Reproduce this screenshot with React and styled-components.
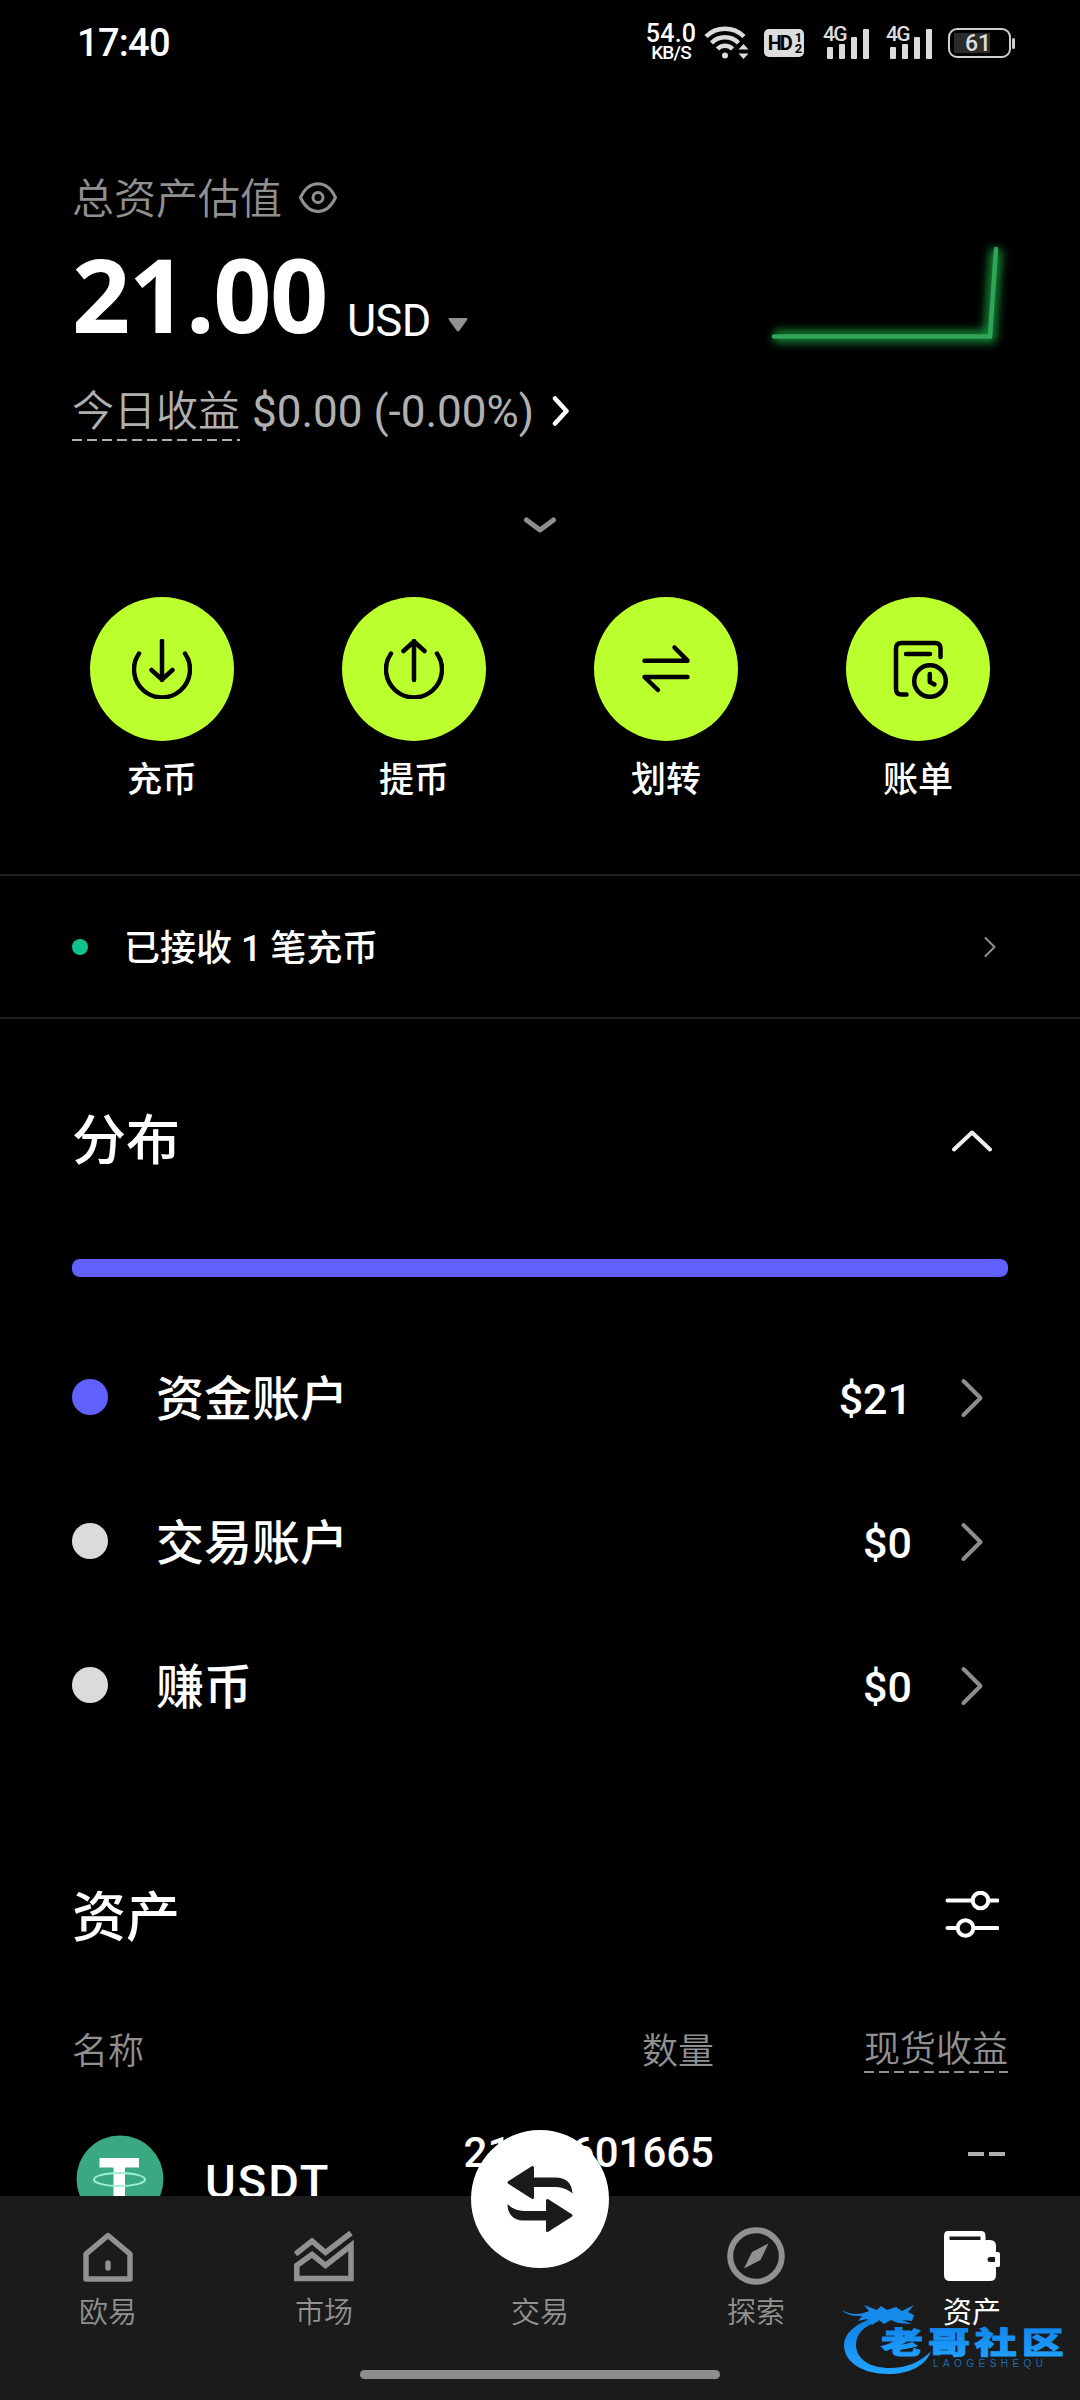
import React from 'react';
import styled, { createGlobalStyle } from 'styled-components';

const GlobalStyle = createGlobalStyle`
	* {
		box-sizing: border-box;
	}

	body {
		margin: 0;
		background: #000;
		color: #fff;
		font-family: Roboto, 'Noto Sans CJK SC', sans-serif;
	}

	svg {
		display: block;
		flex: none;
	}
`;

const Page = styled.div`
	position: relative;
	width: 1080px;
	height: 2400px;
	overflow: hidden;
	background: #000;
`;

const StatusBar = styled.header`
	display: flex;
	align-items: center;
	height: 86px;
	padding: 0 65px 0 77px;
`;

const Clock = styled.span`
	flex: 1;
	font-size: 38px;
	font-weight: 500;
	line-height: 44px;
	letter-spacing: -0.7px;
`;

const Speed = styled.div`
	display: flex;
	flex-direction: column;
	align-items: center;
	width: 54px;
	margin-right: 6px;
	font-weight: 500;
`;

const SpeedValue = styled.span`
	font-size: 25px;
	line-height: 20px;
	letter-spacing: 0.2px;
`;

const SpeedUnit = styled.span`
	font-size: 19px;
	line-height: 18px;
	letter-spacing: -0.8px;
`;

const StatusIcons = styled.div`
	display: flex;
	align-items: center;
	color: #dcdcdc;
`;

const HdBadge = styled.div`
	display: flex;
	align-items: center;
	justify-content: center;
	gap: 4px;
	width: 40px;
	height: 28px;
	margin: 0 19px 0 14px;
	border-radius: 5px;
	background: #dcdcdc;
	color: #000;
	font: 700 20px/28px Roboto, sans-serif;
	letter-spacing: -2px;
`;

const HdLines = styled.span`
	display: flex;
	flex-direction: column;
	font-size: 13px;
	line-height: 11px;
`;

const SignalBox = styled.div`
	position: relative;
	width: 47px;
	height: 34px;
	margin-right: 16px;
`;

const SignalLabel = styled.span`
	position: absolute;
	left: 0;
	top: -2px;
	font: 500 21px/21px Roboto, sans-serif;
	letter-spacing: -1.6px;
`;

const Battery = styled.div`
	position: relative;
	width: 63px;
	height: 30px;
	margin-left: -1px;
	border: 2px solid #cfcfcf;
	border-radius: 9px;
	background: linear-gradient(90deg, #2b2b2b 36px, #000 36px) 4px 3px / 50px 20px no-repeat;
	font: 500 23px/27px Roboto, sans-serif;
	text-align: center;
	padding-right: 3px;
	margin-right: 4px;

	&::after {
		content: '';
		position: absolute;
		right: -6px;
		top: 8px;
		width: 3px;
		height: 11px;
		border-radius: 2px;
		background: #cfcfcf;
	}
`;

const Summary = styled.section`
	padding: 84px 72px 0;
`;

const SummaryLabel = styled.div`
	display: flex;
	align-items: center;
	height: 60px;
	gap: 17px;
	color: #909090;
	font-size: 42px;
	font-weight: 350;
	line-height: 60px;

	svg {
		margin-bottom: 5px;
	}
`;

const BalanceRow = styled.div`
	display: flex;
	justify-content: space-between;
	height: 120px;
`;

const Balance = styled.div`
	display: flex;
	align-items: baseline;
	height: 120px;
`;

const Amount = styled.span`
	font-family: 'Open Sans', sans-serif;
	font-size: 102px;
	font-weight: 700;
	line-height: 127px;
	letter-spacing: -1.5px;
`;

const Currency = styled.span`
	margin: 0 17px 0 20px;
	font-size: 45px;
	font-weight: 400;
	letter-spacing: -0.5px;
	position: relative;
	top: 3px;
`;

const Caret = styled.svg`
	margin-bottom: 5px;
`;

const Profit = styled.div`
	display: flex;
	align-items: center;
	height: 60px;
	margin-top: 31px;
	color: #b0b0b0;
	font-size: 42px;
	line-height: 60px;
	white-space: pre;
`;

const dashes = (color) => `
	background: repeating-linear-gradient(90deg, ${color} 0 10px, transparent 10px 15px)
		left bottom / 100% 2px no-repeat;
`;

const ProfitLabel = styled.span`
	height: 60px;
	margin-right: 12px;
	padding-top: 1px;
	font-weight: 350;
	${dashes('#b0b0b0')}
`;

const ProfitValue = styled.span`
	margin-right: 18px;
	padding-top: 1px;
	font-size: 44px;
`;

const Expand = styled.div`
	display: flex;
	justify-content: center;
	padding-top: 75px;
`;

const Actions = styled.nav`
	display: flex;
	gap: 108px;
	padding: 63px 90px 0;
`;

const Action = styled.div`
	display: flex;
	flex-direction: column;
	align-items: center;
	width: 144px;
	font-size: 35px;
	font-weight: 500;
	line-height: 50px;
`;

const ActionButton = styled.div`
	display: grid;
	place-items: center;
	width: 144px;
	height: 144px;
	margin-bottom: 15px;
	border-radius: 50%;
	background: #bcff2f;
	color: #000;
`;

const Notice = styled.div`
	display: flex;
	align-items: center;
	height: 145px;
	margin-top: 68px;
	padding: 0 84px 0 72px;
	border-top: 2px solid #202020;
	border-bottom: 2px solid #202020;
	font-size: 36px;
	font-weight: 500;
	line-height: 50px;
`;

const NoticeText = styled.span`
	flex: 1;
	margin-left: 36px;
	padding-top: 5px;
`;

const Dot = styled.span`
	width: ${(props) => props.$size}px;
	height: ${(props) => props.$size}px;
	border-radius: 50%;
	background: ${(props) => props.$color};
`;

const Section = styled.section`
	padding: ${(props) => props.$top}px 72px 0;
`;

const SectionHead = styled.div`
	display: flex;
	align-items: center;
	justify-content: space-between;
	height: 60px;
	padding-right: ${(props) => props.$inset}px;
`;

const Title = styled.h2`
	margin: 0;
	padding-top: 6px;
	font-size: 54px;
	font-weight: 500;
	line-height: 60px;
`;

const Share = styled.div`
	height: 18px;
	margin: 90px 0 48px;
	border-radius: 8px;
	background: #6161ff;
`;

const Account = styled.div`
	display: flex;
	align-items: center;
	height: 144px;
	padding-right: 24px;
	font-size: 48px;
	font-weight: 500;
	line-height: 60px;

	svg {
		margin-top: 2px;
	}
`;

const AccountName = styled.span`
	flex: 1;
	margin-left: 48px;
	padding-top: 6px;
`;

const AccountValue = styled.span`
	margin-right: 48px;
	padding-top: 3px;
	font-size: 43px;
`;

const Columns = styled.div`
	display: grid;
	grid-template-columns: 1fr 300px 294px;
	margin-top: 74px;
	color: #909090;
	font-size: 36px;
	font-weight: 350;
	line-height: 53px;
`;

const ColumnName = styled.span`
	justify-self: ${(props) => props.$side || 'end'};
	height: 53px;
	padding-top: ${(props) => (props.$dashed ? 4 : 6)}px;
	${(props) => props.$dashed && dashes('#909090')}
`;

const Asset = styled.div`
	display: grid;
	grid-template-columns: 1fr 300px 294px;
	margin-top: 62px;
`;

const Coin = styled.div`
	display: flex;
	gap: 41px;
	padding-left: 4px;
`;

const CoinName = styled.span`
	margin-top: 24px;
	font-size: 47px;
	font-weight: 500;
	line-height: 46px;
	letter-spacing: 2px;
`;

const Quantity = styled.span`
	justify-self: end;
	margin-top: -11px;
	font-size: 42px;
	font-weight: 500;
	line-height: 57px;
`;

const Empty = styled.span`
	display: flex;
	justify-self: end;
	gap: 5px;
	padding: 17px 3px 0 0;

	&::before,
	&::after {
		content: '';
		width: 16px;
		height: 4px;
		background: #b0b0b0;
	}
`;

const TabBar = styled.nav`
	position: absolute;
	left: 0;
	right: 0;
	bottom: 0;
	display: flex;
	height: 204px;
	background: #1b1b1b;
`;

const Tab = styled.div`
	display: flex;
	flex-direction: column;
	align-items: center;
	width: 216px;
	padding-top: 30px;
	color: ${(props) => (props.$active ? '#fff' : '#919191')};
	font-size: 29px;
	font-weight: ${(props) => (props.$active ? 400 : 350)};
	line-height: 50px;

	& > svg {
		margin-bottom: 2px;
	}
`;

const TradeButton = styled.div`
	display: grid;
	place-items: center;
	width: 138px;
	height: 138px;
	margin: -96px 0 20px;
	border-radius: 50%;
	background: #fff;
`;

const HomeIndicator = styled.div`
	position: absolute;
	left: 360px;
	bottom: 21px;
	width: 360px;
	height: 9px;
	border-radius: 5px;
	background: #8e8e8e;
`;

const Watermark = styled.svg`
	position: absolute;
	right: 8px;
	bottom: 20px;
`;

const Stroke = ({ w, h, d, width = 4.5, color = 'currentColor', children }) => (
	<svg
		width={w}
		height={h}
		viewBox={`0 0 ${w} ${h}`}
		fill="none"
		stroke={color}
		strokeWidth={width}
		strokeLinecap="round"
		strokeLinejoin="round"
	>
		<path d={d} />
		{children}
	</svg>
);

const Wifi = () => (
	<svg width="46" height="36" viewBox="0 0 46 36" fill="none" stroke="currentColor" strokeWidth="4.500">
		<path d="M2 11.500a27 27 0 0 1 38 0M7.500 18a19 19 0 0 1 27 0M13.500 24a10.500 10.500 0 0 1 15 0" />
		<circle cx="21" cy="30.500" r="3" fill="currentColor" stroke="none" />
		<path d="M34.500 24.500l5-5.500 5 5.500zM34.500 28.500l5 5.500 5-5.500z" fill="currentColor" stroke="none" />
	</svg>
);

const Signal = () => (
	<SignalBox>
		<SignalLabel>4G</SignalLabel>
		<svg width="47" height="34" viewBox="0 0 47 34" fill="currentColor">
			<rect x="4" y="21" width="6" height="12" rx="1" />
			<rect x="16" y="18" width="6" height="15" rx="1" />
			<rect x="28" y="11" width="6" height="22" rx="1" />
			<rect x="40" y="3" width="6" height="30" rx="1" />
		</svg>
	</SignalBox>
);

const Eye = () => (
	<Stroke w={38} h={32} width={3} d="M1.500 15.500C10-3 28-3 36.500 15.500 28 34 10 34 1.500 15.500Z">
		<circle cx="19" cy="15.500" r="5" />
	</Stroke>
);

// line reaches past its own box so the glow is not cut off
const Sparkline = () => (
	<svg width="240" height="120" viewBox="0 0 240 120" fill="none" overflow="visible">
		<defs>
			<filter id="glow" x="-20%" y="-40%" width="140%" height="180%">
				<feGaussianBlur stdDeviation="5" />
			</filter>
		</defs>
		<path d="M6 106.500H222L228 19" stroke="#138a35" strokeWidth="12" filter="url(#glow)" />
		<path d="M6 106.500H222L228 19" stroke="#31a557" strokeWidth="4.500" strokeLinecap="round" />
	</svg>
);

const Deposit = () => (
	<Stroke w={60} h={60} d="M7 14.500a28 28 0 1 0 46 0M30 2v39M19.500 31L30 40.500 40.500 31" />
);

const Withdraw = () => (
	<Stroke w={60} h={60} d="M7 14.500a28 28 0 1 0 46 0M30 41V2M19.500 12L30 2.500 40.500 12" />
);

const Transfer = () => (
	<Stroke w={60} h={60} d="M8.500 21.700H51.500L38.500 8.500M51.500 38H8.500L22 51" />
);

const Bill = () => (
	<Stroke w={60} h={60} d="M18.500 55.500H13.500Q8 55.500 8 50V9.500Q8 4 13.500 4H47Q52.500 4 52.500 9.500V18M18 15H42">
		<circle cx="42" cy="42" r="15.800" />
		<path d="M41.800 35V43L46.500 45.500" />
	</Stroke>
);

const Filter = () => (
	<Stroke w={54} h={50} width={4} d="M2.500 9.500H26M45 9.500H52.500M2.500 37H11M30 37H52.500">
		<circle cx="35.500" cy="9.500" r="7.800" />
		<circle cx="20.500" cy="37" r="7.800" />
	</Stroke>
);

const Tether = () => (
	<svg width="88" height="88" viewBox="0 0 88 88">
		<circle cx="44" cy="44" r="43.500" fill="#3aa982" />
		<path d="M23.500 23H63V32.500H49V70H37.500V32.500H23.500Z" fill="#fff" />
		<ellipse cx="43.500" cy="44.500" rx="25.500" ry="6.500" fill="none" stroke="#9ff0d4" strokeWidth="2" />
	</svg>
);

const HomeIcon = () => (
	<Stroke w={60} h={60} width={5.5} d="M8 53V28L30 9.500 52 28V53Z">
		<path d="M30 37V42" />
	</Stroke>
);

const MarketIcon = () => (
	<svg width="60" height="60" viewBox="0 0 60 60" fill="none" stroke="currentColor" strokeWidth="5.500">
		<path d="M1.500 28L18 15 31.500 26.500 57 7M2.800 52.500V39.500L18 28.500 31.500 39.500 57 19.500V52.500Z" />
	</svg>
);

const CompassIcon = () => (
	<svg width="60" height="60" viewBox="0 0 60 60" fill="none" stroke="currentColor" strokeWidth="6">
		<circle cx="30" cy="30" r="25.800" />
		<path d="M42.500 17.500L34.500 34 18 42.500 26 26Z" fill="currentColor" stroke="none" />
	</svg>
);

const WalletIcon = () => (
	<svg width="60" height="60" viewBox="2 0 60 60" fill="#fff">
		<path d="M8 5H41Q45.500 5 45.500 9.500V14H50Q56 14 56 20V26H58Q60 26 60 28V39.500Q60 41 58 41H56V49Q56 55 50 55H10Q4 55 4 49V10Q4 5 8 5Z" />
		<path d="M9.500 10.500H40.500V14H9.500ZM50 31H55V36H50A2.500 2.500 0 0 1 50 31Z" fill="#1b1b1b" />
	</svg>
);

const TradeIcon = () => (
	<svg width="66" height="68" viewBox="0 0 66 68" fill="#1b1b1b" stroke="#1b1b1b" strokeLinejoin="round">
		<path d="M2 17.500L25.500 2.500V32.500Z" strokeWidth="3" />
		<path d="M26 12.500H48C59 12.500 65 18 65.500 28.500 60 23.500 54 22 46 22H26Z" stroke="none" />
		<path d="M64 50.500L40.500 35.500V65.500Z" strokeWidth="3" />
		<path d="M40 55.500H18C7 55.500 0.500 50 0.500 39 6 44.500 12 46 20 46H40Z" stroke="none" />
	</svg>
);

const Brand = () => (
	<Watermark width="236" height="84" viewBox="0 0 236 84">
		<defs>
			<linearGradient id="brand" x1="0" y1="0" x2="0" y2="1">
				<stop offset="0" stopColor="#0f7fe6" />
				<stop offset="1" stopColor="#22a4ff" />
			</linearGradient>
		</defs>
		<path
			d="M34 23C18 29 8 38 8 49 8 67 28 78 52 78 73 78 90 70 95 55 85 66 70 72 54 72 34 72 20 63 20 49 20 37 29 29 44 25Z"
			fill="url(#brand)"
		/>
		<path
			d="M6 14C14 19 24 19 33 15L28 9 41 14 45 10 51 14 60 11 66 15 78 9 72 16 78 19 76 25 66 24 76 28 62 27 55 24 48 28 43 24 36 29 31 23 22 25 26 20C17 20 10 19 6 14Z"
			fill="#168be9"
		/>
		<g transform="translate(45 57) scale(1.400 1)">
			<text
				fill="url(#brand)"
				stroke="url(#brand)"
				strokeWidth="0.900"
				fontFamily="'Noto Sans CJK SC', sans-serif"
				fontSize="30"
				fontWeight="900"
				letterSpacing="3.500"
			>
				老哥社区
			</text>
		</g>
		<text
			x="97"
			y="71"
			fill="#1a6db5"
			fontFamily="'Liberation Sans', sans-serif"
			fontSize="10"
			textLength="110"
		>
			LAOGESHEQU
		</text>
	</Watermark>
);

const actions = [
	{ name: '充币', Icon: Deposit },
	{ name: '提币', Icon: Withdraw },
	{ name: '划转', Icon: Transfer },
	{ name: '账单', Icon: Bill },
];

const accounts = [
	{ name: '资金账户', value: '$21', color: '#6161ff' },
	{ name: '交易账户', value: '$0', color: '#dbdbdb' },
	{ name: '赚币', value: '$0', color: '#dbdbdb' },
];

const App = () => (
	<Page>
		<GlobalStyle />
		<StatusBar>
			<Clock>17:40</Clock>
			<Speed>
				<SpeedValue>54.0</SpeedValue>
				<SpeedUnit>KB/S</SpeedUnit>
			</Speed>
			<StatusIcons>
				<Wifi />
				<HdBadge>
					HD
					<HdLines>
						<span>1</span>
						<span>2</span>
					</HdLines>
				</HdBadge>
				<Signal />
				<Signal />
				<Battery>61</Battery>
			</StatusIcons>
		</StatusBar>

		<Summary>
			<SummaryLabel>
				总资产估值
				<Eye />
			</SummaryLabel>
			<BalanceRow>
				<Balance>
					<Amount>21.00</Amount>
					<Currency>USD</Currency>
					<Caret width="20" height="15" viewBox="0 0 20 15" fill="#919191">
						<path d="M2 0H18Q20.500 0 19 2L11.500 12.500Q10 14.500 8.500 12.500L1 2Q-0.500 0 2 0Z" />
					</Caret>
				</Balance>
				<Sparkline />
			</BalanceRow>
			<Profit>
				<ProfitLabel>今日收益</ProfitLabel>
				<ProfitValue>$0.00 (-0.00%)</ProfitValue>
				<Stroke w={18} h={32} color="#fff" d="M3 3.500L14.500 16 3 28.500" />
			</Profit>
		</Summary>

		<Expand>
			<Stroke w={36} h={18} width={5} color="#8e8e8e" d="M4.500 4L18 14 31.500 4" />
		</Expand>

		<Actions>
			{actions.map(({ name, Icon }) => (
				<Action key={name}>
					<ActionButton>
						<Icon />
					</ActionButton>
					{name}
				</Action>
			))}
		</Actions>

		<Notice>
			<Dot $size={16} $color="#12c28c" />
			<NoticeText>已接收 1 笔充币</NoticeText>
			<Stroke w={12} h={24} width={2} color="#919191" d="M1.500 3L10.500 12 1.500 21" />
		</Notice>

		<Section $top={90}>
			<SectionHead $inset={14}>
				<Title>分布</Title>
				<Stroke w={44} h={26} width={4} color="#eee" d="M4 23.500L22 6.500 40 23.500" />
			</SectionHead>
			<Share />
			{accounts.map((account) => (
				<Account key={account.name}>
					<Dot $size={36} $color={account.color} />
					<AccountName>{account.name}</AccountName>
					<AccountValue>{account.value}</AccountValue>
					<Stroke w={24} h={42} width={4} color="#8e8e8e" d="M3.500 4L20.500 21 3.500 38" />
				</Account>
			))}
		</Section>

		<Section $top={129}>
			<SectionHead $inset={9}>
				<Title>资产</Title>
				<Filter />
			</SectionHead>
			<Columns>
				<ColumnName $side="start">名称</ColumnName>
				<ColumnName>数量</ColumnName>
				<ColumnName $dashed>现货收益</ColumnName>
			</Columns>
			<Asset>
				<Coin>
					<Tether />
					<CoinName>USDT</CoinName>
				</Coin>
				<Quantity>21.00601665</Quantity>
				<Empty />
			</Asset>
		</Section>

		<TabBar>
			<Tab>
				<HomeIcon />
				欧易
			</Tab>
			<Tab>
				<MarketIcon />
				市场
			</Tab>
			<Tab>
				<TradeButton>
					<TradeIcon />
				</TradeButton>
				交易
			</Tab>
			<Tab>
				<CompassIcon />
				探索
			</Tab>
			<Tab $active>
				<WalletIcon />
				资产
			</Tab>
			<HomeIndicator />
		</TabBar>
		<Brand />
	</Page>
);

export default App;
